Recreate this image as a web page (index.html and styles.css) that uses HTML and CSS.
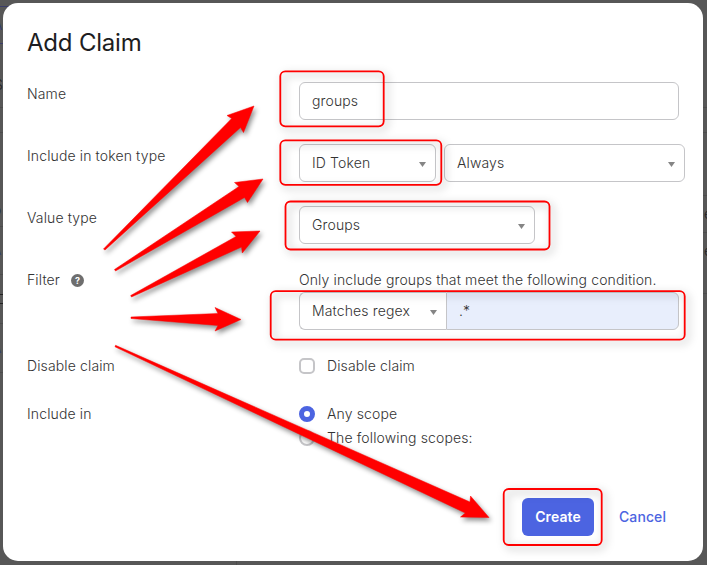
FILE: index.html
```html
<!DOCTYPE html>
<html lang="en">
<head>
<meta charset="utf-8">
<title>Add Claim</title>
<link rel="stylesheet" href="styles.css">
</head>
<body>
<svg class="backdrop" viewBox="0 0 707 565" aria-hidden="true">
  <path class="rule-blue" d="M0 6.5H12M0 43.5H3"/>
  <path class="rule" d="M0 107.5H3M0 132.5H3M0 226.5H3M0 274.5H3M0 323.5H3M0 372.5H3M703 107.5H707M703 132.5H707M703 195.5H707M703 232.5H707M703 293.5H707M236.500 561V565"/>
  <path class="rule-dark" d="M0 294.500H3M0 303.500H3"/>
  <text class="bd-blue" x="-7" y="30">A</text>
  <text class="bd-text" x="-6" y="90">S</text>
  <text class="bd-text" x="-7" y="215">o</text>
  <text class="bd-blue" x="-8" y="255">A</text>
  <text class="bd-blue" x="-8" y="353">A</text>
  <text class="bd-text" x="704" y="219">e</text>
  <text class="bd-text" x="704" y="256">e</text>
</svg>
<main class="modal">
  <h1 class="title">Add Claim</h1>
  <form class="form">
    <div class="row">
      <div class="label">Name</div>
      <div class="control name-input">groups</div>
    </div>
    <div class="row">
      <div class="label">Include in token type</div>
      <div class="selects">
        <div class="control token-select">ID Token<i class="caret"></i></div>
        <div class="control always-select">Always<i class="caret"></i></div>
      </div>
    </div>
    <div class="row">
      <div class="label">Value type</div>
      <div class="control value-select">Groups<i class="caret"></i></div>
    </div>
    <div class="row">
      <div class="label">Filter<span class="help">?</span></div>
      <div>
        <p class="hint">Only include groups that meet the following condition.</p>
        <div class="filter-group">
          <div class="control match-select">Matches regex<i class="caret"></i></div>
          <div class="control regex-input">.*</div>
        </div>
      </div>
    </div>
    <div class="row">
      <div class="label">Disable claim</div>
      <div class="choice"><span class="checkbox"></span>Disable claim</div>
    </div>
    <div class="row">
      <div class="label">Include in</div>
      <div>
        <div class="choice"><span class="radio checked"></span>Any scope</div>
        <div class="choice"><span class="radio"></span>The following scopes:</div>
      </div>
    </div>
  </form>
  <div class="actions">
    <button class="create" type="button">Create</button>
    <a class="cancel">Cancel</a>
  </div>
</main>
<svg class="annotations" viewBox="0 0 707 565" aria-hidden="true">
  <g class="boxes">
    <rect x="280.300" y="71.300" width="103.400" height="55" rx="5"/>
    <rect x="280.300" y="140.300" width="161" height="44.500" rx="5"/>
    <rect x="285.500" y="201.500" width="264" height="48" rx="5"/>
    <rect x="270.700" y="291.200" width="414" height="48.500" rx="5"/>
    <rect x="503.700" y="489" width="98" height="56" rx="5"/>
  </g>
  <g class="arrows">
    <path d="M103.500 249L231.700 118.500L227 115.500L254 106L243.500 132.500L240.500 127.500L105 250Z"/>
    <path d="M114.500 269.500L239 186.500L234.500 182.500L263 179L247.500 202.500L244.500 197.500L115.500 271Z"/>
    <path d="M130.700 295.500L236 236.500L231.500 232L260 231L242.300 253L241.500 247L131.500 297Z"/>
    <path d="M131 317L218 313.500L215 307.500L241 319.500L215 331L218 325.500L131 318.500Z"/>
    <path d="M115.500 345.300L470 502L470.500 496L489 517.500L460.500 517L465.300 513L115 346.800Z"/>
  </g>
</svg>
</body>
</html>
```

FILE: styles.css
```css
* { box-sizing: border-box; }

body {
  margin: 0;
  width: 707px;
  height: 565px;
  padding: 3px 4px 4px 3px;
  overflow: hidden;
  background: #575757;
  color: #333;
  font: 300 14px/24px Inter, "Liberation Sans", sans-serif;
  letter-spacing: 0.13px;
}

.backdrop, .annotations {
  position: absolute;
  top: 0;
  left: 0;
  width: 707px;
  height: 565px;
  pointer-events: none;
}

.rule, .rule-blue, .rule-dark { fill: none; stroke: #4c4c4c; }
.rule-blue { stroke: #3b3d68; }
.rule-dark { stroke: #222; }
.bd-text { fill: #222; font-size: 14px; }
.bd-blue { fill: #303a72; font-size: 14px; }

.modal {
  position: relative;
  height: 558px;
  padding: 24px;
  border-radius: 15px;
  background: #fff;
}

.title {
  margin: 0 0 23px;
  color: #1d1d21;
  font-size: 24px;
  font-weight: 400;
  line-height: 32px;
  letter-spacing: -0.2px;
}

.form { display: grid; gap: 24px; }
.row { display: grid; grid-template-columns: 272px 1fr; }
.label { display: flex; align-items: center; height: 24px; }

.help {
  width: 13px;
  height: 13px;
  margin-left: 11px;
  border-radius: 50%;
  background: #6e6e6e;
  color: #fff;
  font-size: 9px;
  font-weight: 700;
  line-height: 13px;
  letter-spacing: 0;
  text-align: center;
}

.control {
  display: flex;
  align-items: center;
  justify-content: space-between;
  height: 38px;
  padding: 0 9px 0 12px;
  border: 1px solid #c5c5c8;
  border-radius: 6px;
}

.caret {
  width: 7px;
  height: 5px;
  margin-top: 3px;
  background: #858585;
  clip-path: polygon(0 0, 100% 0, 50% 100%);
}

.name-input { width: 380px; }
.selects { display: flex; gap: 8px; }
.token-select { width: 137px; }
.always-select { width: 241px; }
.value-select { width: 236px; }
.hint { margin: 0; }
.filter-group { display: flex; }
.match-select { width: 147px; border-right: 0; border-radius: 6px 0 0 6px; }
.regex-input { width: 233px; border-radius: 0 6px 6px 0; background: #e8eefc; }

.choice { display: flex; align-items: center; gap: 12px; height: 24px; }
.checkbox, .radio { width: 16px; height: 16px; border: 2px solid #c5c5c8; }
.checkbox { border-radius: 5px; }
.radio { border-radius: 50%; }
.radio.checked { border: 5px solid #4c64e1; }

.actions { display: flex; align-items: center; margin: 48px 0 0 495px; }
.create {
  width: 72px;
  height: 38px;
  padding: 0;
  border: 0;
  border-radius: 6px;
  background: #4c64e1;
  color: #fff;
  font: 600 14px/38px Inter, sans-serif;
  letter-spacing: 0.1px;
}
.cancel { margin-left: 25px; color: #4c64e1; font-weight: 500; letter-spacing: 0.1px; }

.boxes { fill: none; stroke: #f00; stroke-width: 1.8; filter: drop-shadow(3px 3px 4px rgb(0 0 0 / 35%)); }
.arrows { fill: #f00; stroke: #f00; stroke-width: 0.5; filter: drop-shadow(2px 3px 2.5px rgb(0 0 0 / 45%)); }
```
